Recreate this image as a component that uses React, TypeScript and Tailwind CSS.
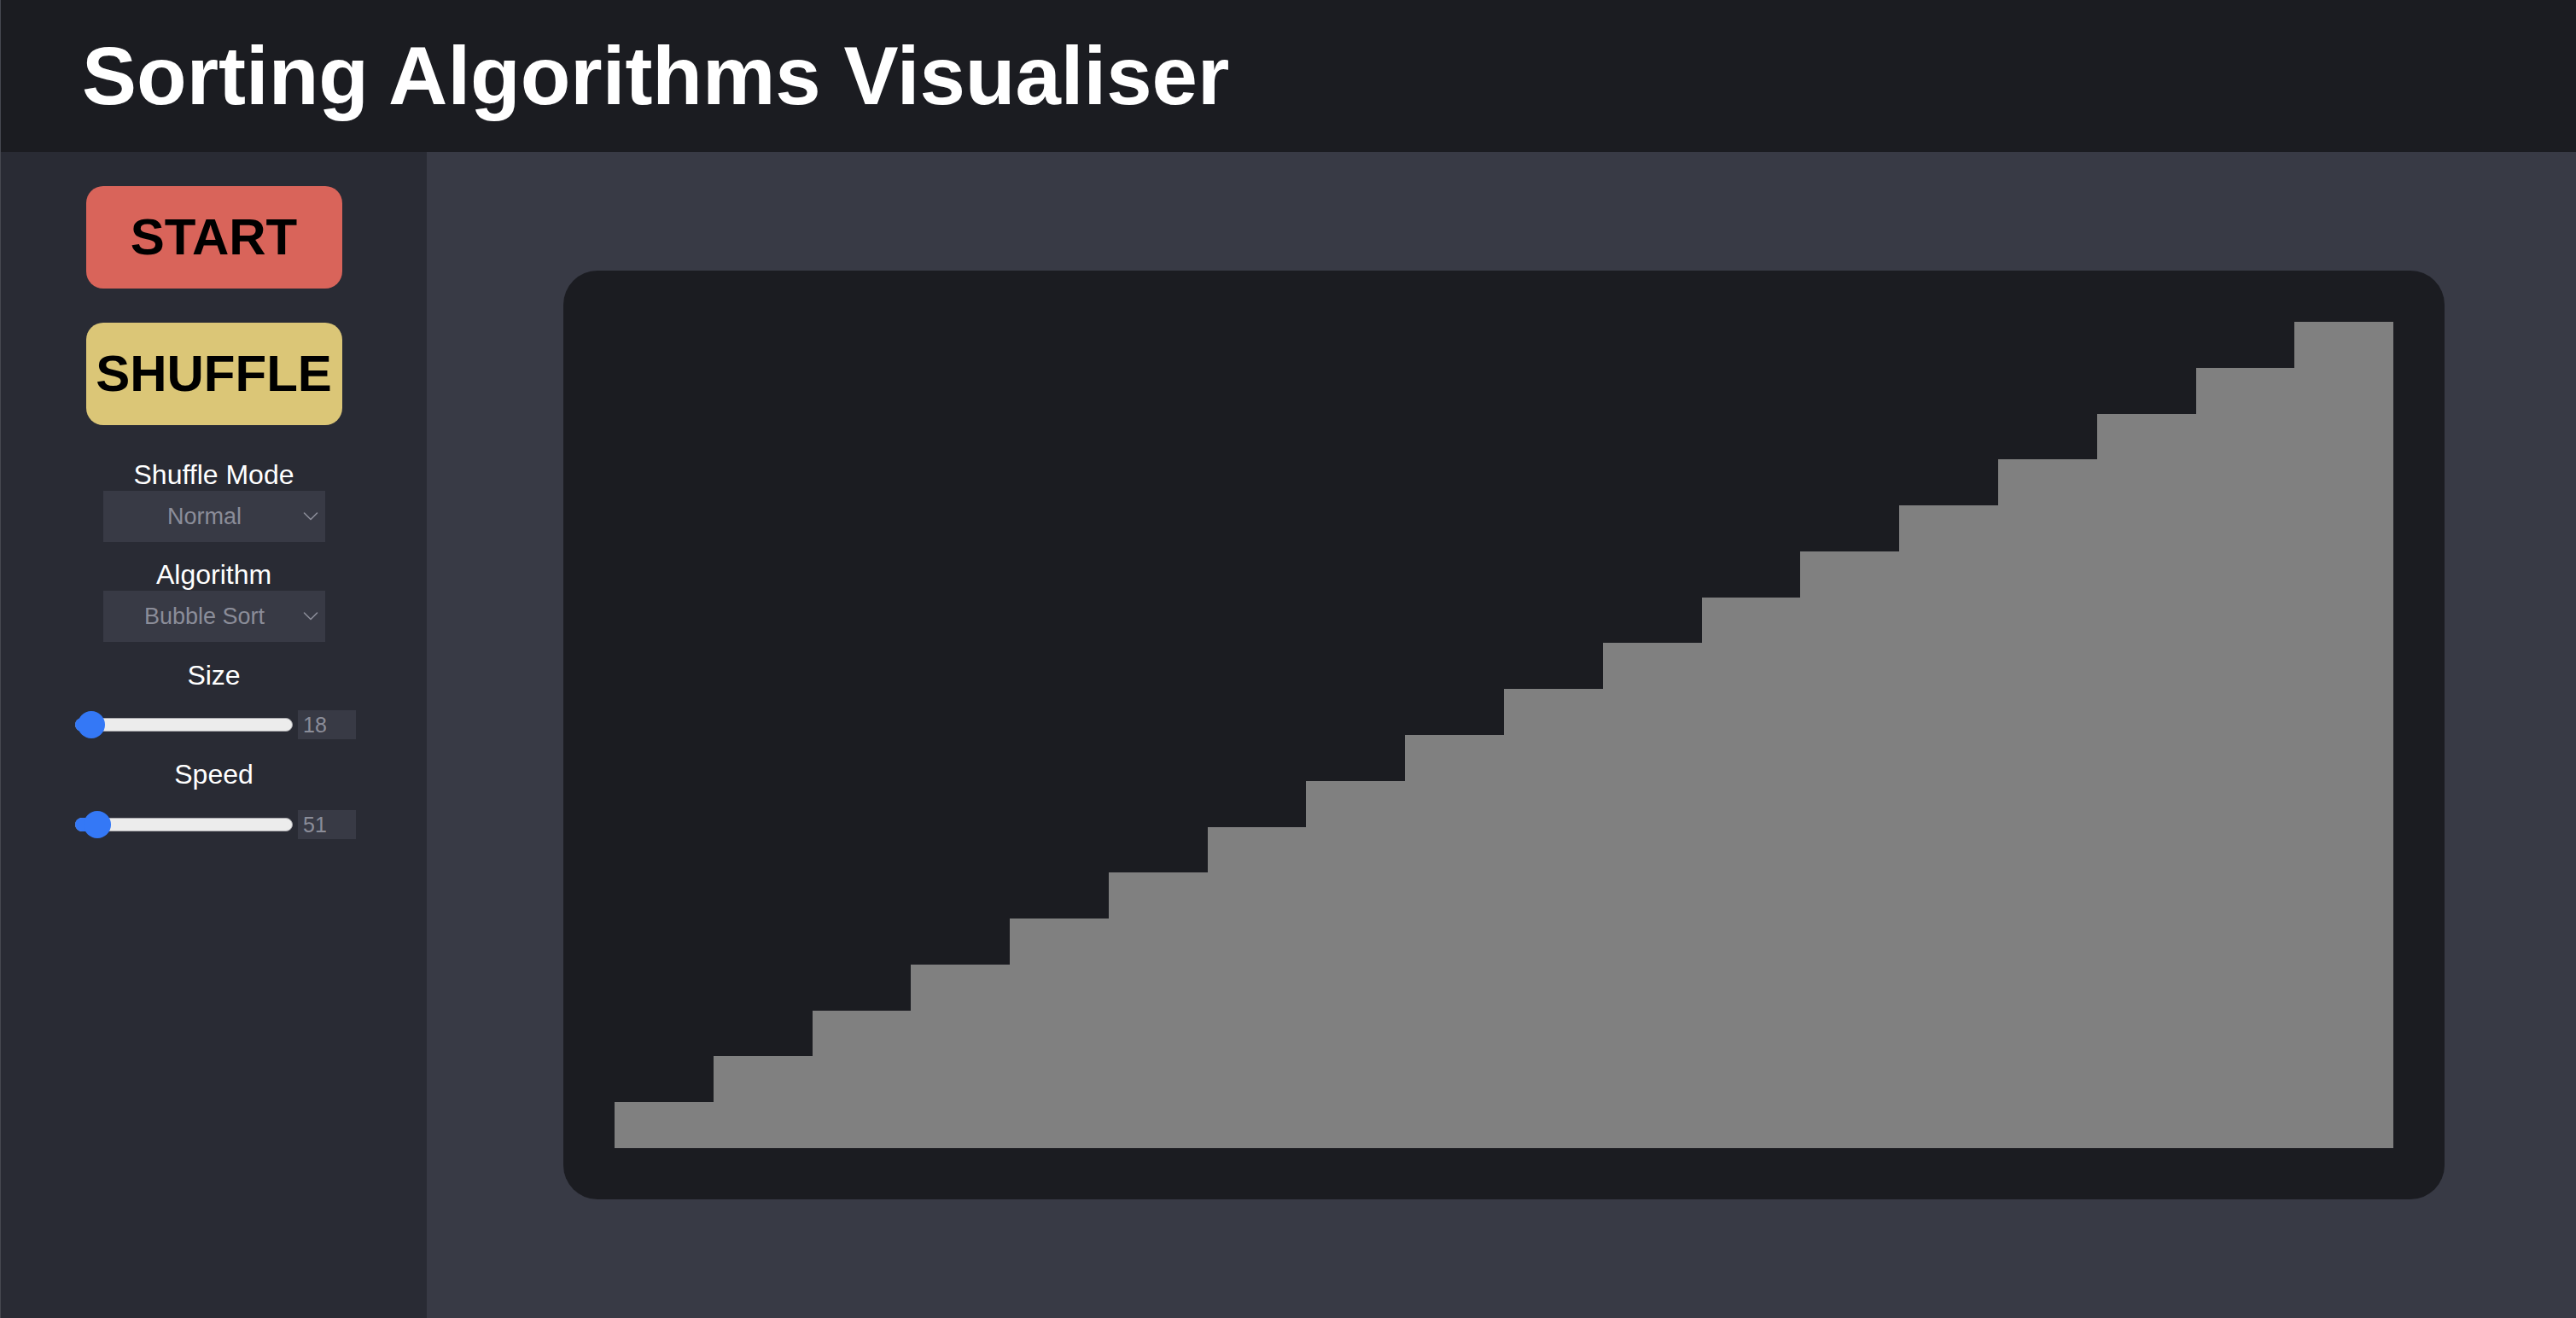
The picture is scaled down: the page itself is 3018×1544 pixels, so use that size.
import React from "react";

const BAR_COUNT = 18;
const bars = Array.from({ length: BAR_COUNT }, (_, i) => i + 1);

function Chevron() {
    return (
        <svg width="18" height="12" viewBox="0 0 18 12" fill="none" className="shrink-0">
            <polyline points="1.5,2 9,9.5 16.5,2" stroke="#8b8d99" strokeWidth="1.6" strokeLinecap="round" strokeLinejoin="round" />
        </svg>
    );
}

function Select({ value }: { value: string }) {
    return (
        <div className="flex h-[60px] w-[260px] items-center bg-[#383a45] pr-[8px]">
            <span className="flex-1 pl-[4px] text-center text-[27px] leading-none text-[#8b8d99]">{value}</span>
            <Chevron />
        </div>
    );
}

function Slider({ value, pos }: { value: number; pos: number }) {
    return (
        <div className="flex items-center justify-center gap-[6px] pl-[4px]">
            <div className="relative h-[34px] w-[255px]">
                <div className="absolute left-0 right-0 top-[9px] h-[16px] rounded-full border border-[#a9a9ad] bg-[#ececec]" />
                <div
                    className="absolute left-0 top-[9px] h-[16px] rounded-l-full bg-[#3478f6]"
                    style={{ width: pos }}
                />
                <div
                    className="absolute top-[1px] h-[32px] w-[32px] rounded-full bg-[#3478f6]"
                    style={{ left: pos - 16 }}
                />
            </div>
            <div className="flex h-[34px] w-[68px] items-center bg-[#383a45] pl-[6px] text-[25px] leading-none text-[#8b8d99]">
                {value}
            </div>
        </div>
    );
}

function Label({ children }: { children: React.ReactNode }) {
    return <div className="text-center text-[32px] leading-[37px] text-white">{children}</div>;
}

export default function App() {
    return (
        <div className="flex h-screen flex-col overflow-hidden border-l border-[#45474f] font-['Liberation_Sans',Arial,sans-serif]">
            <header className="flex h-[178px] shrink-0 items-center bg-[#1b1c21] pl-[95px]">
                <h1 className="text-[96px] font-bold leading-none text-white">Sorting Algorithms Visualiser</h1>
            </header>
            <div className="flex flex-1">
                <aside className="flex w-[499px] shrink-0 flex-col items-center bg-[#292b34] pt-[40px]">
                    <button className="h-[120px] w-[300px] rounded-[20px] bg-[#d9645a] text-[60px] font-bold leading-none text-black">
                        START
                    </button>
                    <button className="mt-[40px] h-[120px] w-[300px] rounded-[20px] bg-[#dbc677] text-[60px] font-bold leading-none text-black">
                        SHUFFLE
                    </button>
                    <div className="mt-[40px] flex flex-col items-center">
                        <Label>Shuffle Mode</Label>
                        <Select value="Normal" />
                    </div>
                    <div className="mt-[20px] flex flex-col items-center">
                        <Label>Algorithm</Label>
                        <Select value="Bubble Sort" />
                    </div>
                    <div className="mt-[21px] flex flex-col items-center">
                        <Label>Size</Label>
                        <div className="mt-[22px]">
                            <Slider value={18} pos={19} />
                        </div>
                    </div>
                    <div className="mt-[23px] flex flex-col items-center">
                        <Label>Speed</Label>
                        <div className="mt-[23px]">
                            <Slider value={51} pos={26} />
                        </div>
                    </div>
                </aside>
                <main className="flex flex-1 items-center justify-center bg-[#383a45]">
                    <div className="ml-[6px] flex h-[1088px] w-[2204px] rounded-[40px] bg-[#1b1c21] p-[60px]">
                        <div className="flex flex-1 items-end">
                            {bars.map((b) => (
                                <div
                                    key={b}
                                    className="flex-1 bg-[#808080]"
                                    style={{ height: `${(b / BAR_COUNT) * 100}%` }}
                                />
                            ))}
                        </div>
                    </div>
                </main>
            </div>
        </div>
    );
}
